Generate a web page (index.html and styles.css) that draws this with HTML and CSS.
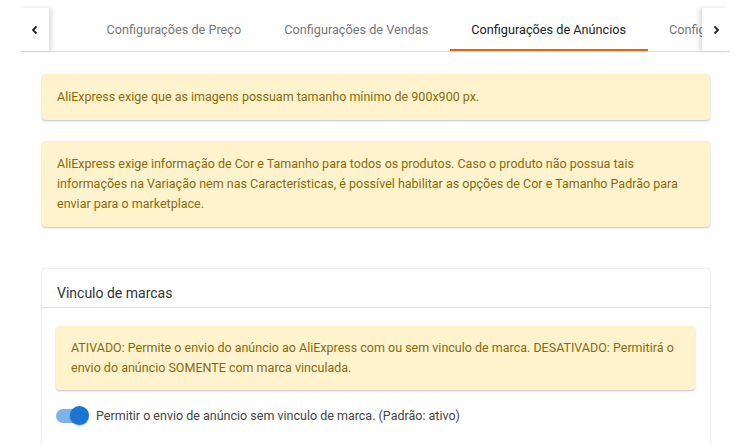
FILE: index.html
```html
<!DOCTYPE html>
<html lang="pt-br">
<head>
  <meta charset="UTF-8" />
  <meta name="viewport" content="width=device-width, initial-scale=1.0"/>
  <title>Configurações AliExpress</title>
  <link rel="stylesheet" href="styles.css">
</head>
<body>
  <div class="tabs">
    <button class="tab-arrow tab-arrow-left" aria-label="Anterior">
      <svg width="10" height="10" viewBox="0 0 10 10"><path d="M6.5 1.5 3 5l3.5 3.5" fill="none" stroke="#222" stroke-width="1.8"/></svg>
    </button>
    <div class="tab-viewport">
      <div class="tab-list">
        <div class="tab">Configurações de Preço</div>
        <div class="tab">Configurações de Vendas</div>
        <div class="tab active">Configurações de Anúncios</div>
        <div class="tab">Configurações de Frete</div>
      </div>
    </div>
    <button class="tab-arrow tab-arrow-right" aria-label="Próximo">
      <svg width="10" height="10" viewBox="0 0 10 10"><path d="M3.5 1.5 7 5 3.5 8.5" fill="none" stroke="#222" stroke-width="1.8"/></svg>
    </button>
  </div>

  <div class="conteudo">
    <div class="alerta">AliExpress exige que as imagens possuam tamanho mínimo de 900x900 px.</div>

    <div class="alerta">AliExpress exige informação de Cor e Tamanho para todos os produtos. Caso o produto não possua tais informações na Variação nem nas Características, é possível habilitar as opções de Cor e Tamanho Padrão para enviar para o marketplace.</div>

    <div class="cartao">
      <div class="cartao-titulo">Vinculo de marcas</div>
      <div class="cartao-corpo">
        <div class="alerta">ATIVADO: Permite o envio do anúncio ao AliExpress com ou sem vinculo de marca. DESATIVADO: Permitirá o envio do anúncio SOMENTE com marca vinculada.</div>
        <label class="chave">
          <span class="chave-trilho"><span class="chave-botao"></span></span>
          <span>Permitir o envio de anúncio sem vinculo de marca. (Padrão: ativo)</span>
        </label>
      </div>
    </div>
  </div>
</body>
</html>
```

FILE: styles.css
```css
body {
  margin: 0;
  font-family: Roboto, 'Liberation Sans', sans-serif;
  background: #fff;
  color: #333;
}

.tabs {
  display: flex;
  height: 43px;
  margin: 8px 20px 0 20px;
  border-bottom: 1px solid #e0e0e0;
}

.tab-arrow {
  width: 29px;
  flex-shrink: 0;
  border: none;
  background: #fff;
  display: flex;
  align-items: center;
  justify-content: center;
  padding: 0;
  position: relative;
  z-index: 1;
}

.tab-arrow-left {
  box-shadow: 3px 0 4px rgba(0,0,0,0.12);
}

.tab-arrow-right {
  width: 28px;
  box-shadow: -3px 0 4px rgba(0,0,0,0.12);
}

.tab-viewport {
  flex: 1;
  overflow: hidden;
}

.tab-list {
  display: flex;
  height: 100%;
  padding-left: 36px;
}

.tab {
  flex-shrink: 0;
  padding: 2px 21.5px 0 21.5px;
  display: flex;
  align-items: center;
  font-size: 12.7px;
  color: #777;
  white-space: nowrap;
  border-bottom: 2px solid transparent;
  box-sizing: border-box;
}

.tab.active {
  color: #222;
  border-bottom-color: #e8620f;
}

.conteudo {
  padding: 22px 40px 0 42px;
}

.alerta {
  background: #fef3cd;
  color: #8a6a0a;
  font-size: 12.5px;
  line-height: 20px;
  padding: 13px 15px;
  border-radius: 4px;
  box-shadow: 0 1px 2px rgba(0,0,0,0.25);
  margin-bottom: 21px;
}

.cartao {
  margin-top: 42px;
  border-radius: 4px;
  box-shadow: 0 0 3px rgba(0,0,0,0.18);
  background: #fff;
}

.cartao-titulo {
  font-size: 14px;
  color: #333;
  padding: 16px 15px 6px 15px;
  line-height: 16px;
  border-bottom: 1px solid #e3e3e3;
}

.cartao-corpo {
  padding: 18px 15px 40px 14px;
}

.cartao-corpo .alerta {
  padding: 12px 15px;
  margin-bottom: 18px;
}

.chave {
  display: flex;
  align-items: center;
  gap: 7px;
  font-size: 12.5px;
  color: #444;
}

.chave-trilho {
  width: 26px;
  height: 14px;
  border-radius: 7px;
  background: #7db3ea;
  display: flex;
  align-items: center;
  justify-content: flex-end;
  margin-right: 7px;
}

.chave-botao {
  width: 19px;
  height: 19px;
  border-radius: 50%;
  background: #1976d2;
  margin-right: -7px;
  box-shadow: 0 1px 2px rgba(0,0,0,0.3);
}
```
